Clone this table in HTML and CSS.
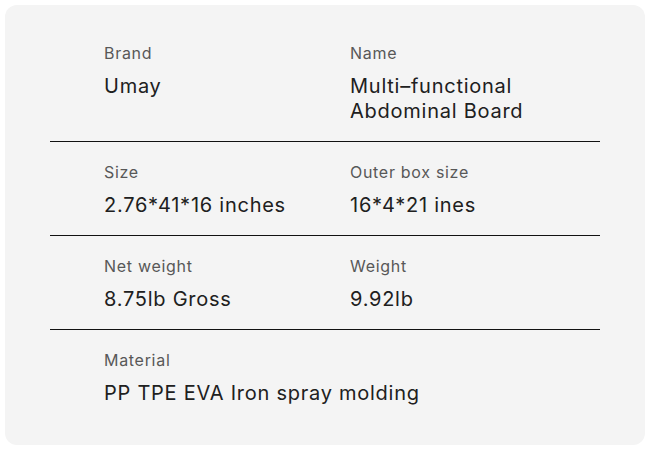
FILE: index.html
```html
<!DOCTYPE html>
<html>
<head>
<meta charset="utf-8">
<link rel="stylesheet" href="styles.css">
</head>
<body>
<div class="card">
  <div class="row">
    <div class="cell"><div class="label">Brand</div><div class="value">Umay</div></div>
    <div class="cell"><div class="label">Name</div><div class="value">Multi–functional<br>Abdominal Board</div></div>
  </div>
  <div class="row">
    <div class="cell"><div class="label">Size</div><div class="value">2.76*41*16 inches</div></div>
    <div class="cell"><div class="label">Outer box size</div><div class="value">16*4*21 ines</div></div>
  </div>
  <div class="row">
    <div class="cell"><div class="label">Net weight</div><div class="value">8.75lb Gross</div></div>
    <div class="cell"><div class="label">Weight</div><div class="value">9.92lb</div></div>
  </div>
  <div class="row last">
    <div class="cell wide"><div class="label">Material</div><div class="value">PP TPE EVA Iron spray molding</div></div>
  </div>
</div>
</body>
</html>
```

FILE: styles.css
```css
html, body {
  margin: 0;
  padding: 0;
  background: #ffffff;
}
body {
  font-family: Inter, "Noto Sans", sans-serif;
}
.card {
  margin: 5px;
  width: 640px;
  height: 440px;
  box-sizing: border-box;
  background: #f4f4f4;
  border-radius: 12px;
  padding-top: 18px;
}
.row {
  margin: 0 45px;
  padding: 20px 0 17px 54px;
  border-bottom: 1px solid #111;
  display: grid;
  grid-template-columns: 246px 1fr;
}
.row.last {
  border-bottom: none;
}
.cell {
  display: flex;
  flex-direction: column;
  gap: 11px;
}
.cell.wide {
  grid-column: 1 / -1;
}
.label {
  font-size: 16px;
  line-height: 20px;
  color: #585858;
  letter-spacing: 0.7px;
}
.value {
  font-size: 20px;
  line-height: 25px;
  color: #202020;
  letter-spacing: 0.75px;
}
```
